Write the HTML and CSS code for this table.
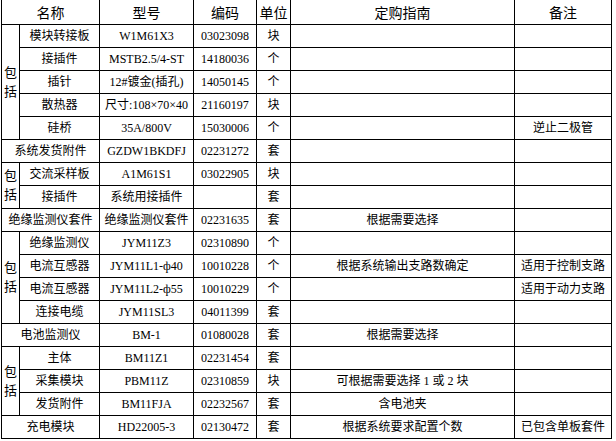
FILE: index.html
```html
<!DOCTYPE html>
<html lang="zh">
<head>
<meta charset="utf-8">
<title>定购指南</title>
<link rel="stylesheet" href="styles.css">
</head>
<body>
<table class="order">
  <colgroup>
    <col class="c-grp"><col class="c-name"><col class="c-model"><col class="c-code"><col class="c-unit"><col class="c-guide"><col class="c-note">
  </colgroup>
  <thead>
    <tr class="head">
      <th colspan="2">名称</th><th>型号</th><th>编码</th><th>单位</th><th>定购指南</th><th>备注</th>
    </tr>
  </thead>
  <tbody>
    <tr><td class="grp" rowspan="5">包<br>括</td><td>模块转接板</td><td>W1M61X3</td><td>03023098</td><td>块</td><td></td><td></td></tr>
    <tr><td>接插件</td><td>MSTB2.5/4-ST</td><td>14180036</td><td>个</td><td></td><td></td></tr>
    <tr><td>插针</td><td>12#镀金(插孔)</td><td>14050145</td><td>个</td><td></td><td></td></tr>
    <tr><td>散热器</td><td>尺寸:108×70×40</td><td>21160197</td><td>块</td><td></td><td></td></tr>
    <tr><td>硅桥</td><td>35A/800V</td><td>15030006</td><td>个</td><td></td><td>逆止二极管</td></tr>
    <tr><td colspan="2">系统发货附件</td><td>GZDW1BKDFJ</td><td>02231272</td><td>套</td><td></td><td></td></tr>
    <tr><td class="grp" rowspan="2">包<br>括</td><td>交流采样板</td><td>A1M61S1</td><td>03022905</td><td>块</td><td></td><td></td></tr>
    <tr><td>接插件</td><td>系统用接插件</td><td></td><td>套</td><td></td><td></td></tr>
    <tr><td colspan="2">绝缘监测仪套件</td><td>绝缘监测仪套件</td><td>02231635</td><td>套</td><td>根据需要选择</td><td></td></tr>
    <tr><td class="grp" rowspan="4">包<br>括</td><td>绝缘监测仪</td><td>JYM11Z3</td><td>02310890</td><td>个</td><td></td><td></td></tr>
    <tr><td>电流互感器</td><td>JYM11L1-ф40</td><td>10010228</td><td>个</td><td>根据系统输出支路数确定</td><td>适用于控制支路</td></tr>
    <tr><td>电流互感器</td><td>JYM11L2-ф55</td><td>10010229</td><td>个</td><td></td><td>适用于动力支路</td></tr>
    <tr><td>连接电缆</td><td>JYM11SL3</td><td>04011399</td><td>套</td><td></td><td></td></tr>
    <tr><td colspan="2">电池监测仪</td><td>BM-1</td><td>01080028</td><td>套</td><td>根据需要选择</td><td></td></tr>
    <tr><td class="grp" rowspan="3">包<br>括</td><td>主体</td><td>BM11Z1</td><td>02231454</td><td>套</td><td></td><td></td></tr>
    <tr><td>采集模块</td><td>PBM11Z</td><td>02310859</td><td>块</td><td>可根据需要选择 1 或 2 块</td><td></td></tr>
    <tr><td>发货附件</td><td>BM11FJA</td><td>02232567</td><td>套</td><td>含电池夹</td><td></td></tr>
    <tr><td colspan="2">充电模块</td><td>HD22005-3</td><td>02130472</td><td>套</td><td>根据系统要求配置个数</td><td>已包含单板套件</td></tr>
  </tbody>
</table>
</body>
</html>
```

FILE: styles.css
```css
html, body {
  margin: 0;
  padding: 0;
  background: #fff;
}
body {
  padding-left: 1px;
}
.order {
  border-collapse: collapse;
  table-layout: fixed;
  width: 611px;
  font-family: "Liberation Serif", "Noto Sans CJK SC", serif;
  font-size: 12px;
  color: #000;
  border: 1px solid #000;
  border-top: none;
}
.c-grp { width: 18px; }
.c-name { width: 80px; }
.c-model { width: 94px; }
.c-code { width: 63px; }
.c-unit { width: 34px; }
.c-guide { width: 224px; }
.c-note { width: 97px; }

.order th,
.order td {
  border: 1px solid #000;
  padding: 0 1px;
  text-align: center;
  vertical-align: middle;
  white-space: nowrap;
  overflow: hidden;
}
.order tbody tr {
  height: 23px;
}
.head {
  height: 24px;
}
.head th {
  border-top: none;
  font-family: "Noto Sans CJK SC", sans-serif;
  font-size: 14px;
  font-weight: normal;
}
.order td {
  line-height: 14px;
}
.order td.grp {
  padding: 0;
  line-height: 19px;
  font-size: 13px;
}
```
